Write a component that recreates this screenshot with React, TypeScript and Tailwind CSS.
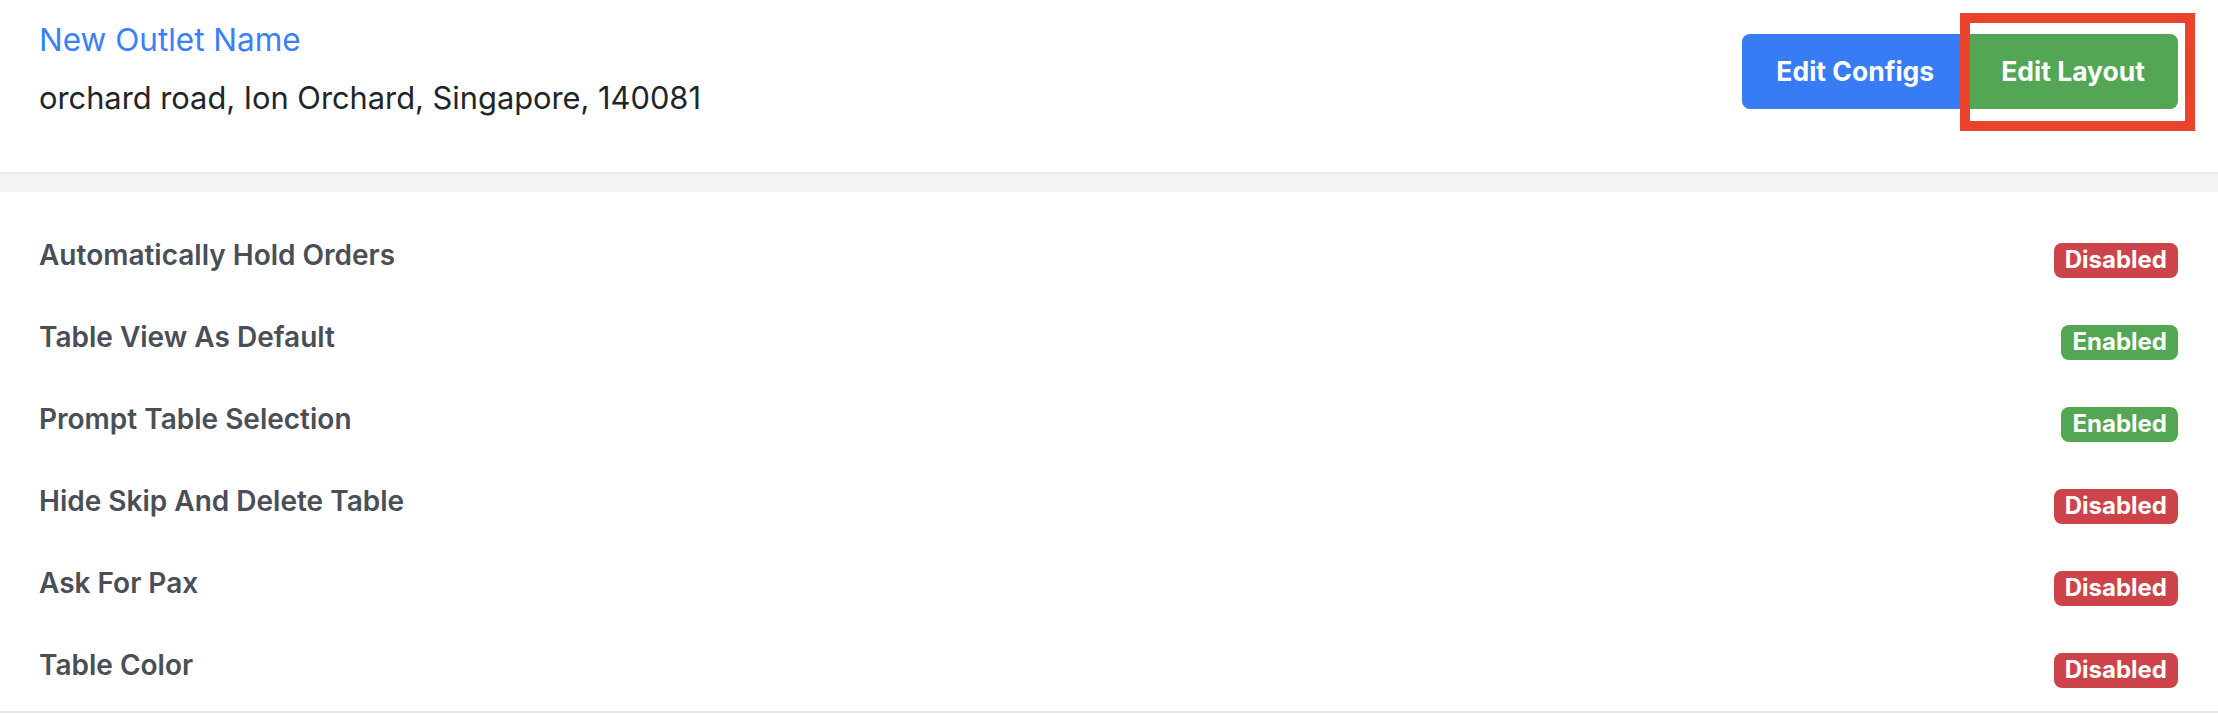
const settings = [
  { label: "Automatically Hold Orders", enabled: false },
  { label: "Table View As Default", enabled: true },
  { label: "Prompt Table Selection", enabled: true },
  { label: "Hide Skip And Delete Table", enabled: false },
  { label: "Ask For Pax", enabled: false },
  { label: "Table Color", enabled: false },
];

function StatusBadge({ enabled }: { enabled: boolean }) {
  return (
    <span
      className={`flex h-[35px] items-center rounded-[8px] px-[11px] text-[24px] leading-none font-bold text-white ${
        enabled ? "bg-[#53a653]" : "bg-[#cc444a]"
      }`}
    >
      {enabled ? "Enabled" : "Disabled"}
    </span>
  );
}

export default function App() {
  return (
    <div className="min-h-[714px] bg-white font-['Inter',sans-serif]">
      <header className="flex items-start justify-between bg-white px-[39px] pt-[22px] pb-[56px]">
        <div className="flex flex-col gap-[22px]">
          <div className="text-[31.5px] leading-[36px] text-[#3b80f6]">New Outlet Name</div>
          <div className="text-[30.8px] leading-[36px] text-[#212529]">
            orchard road, Ion Orchard, Singapore, 140081
          </div>
        </div>
        <div className="relative mt-[12px] mr-[1px] flex">
          <button className="h-[75px] rounded-l-[8px] bg-[#377bf5] px-[34px] text-[26.5px] font-bold text-white">
            Edit Configs
          </button>
          <button className="h-[75px] rounded-r-[8px] bg-[#53a653] px-[33px] text-[26.5px] font-bold text-white">
            Edit Layout
          </button>
          {/* annotation box drawn over the layout button */}
          <div className="pointer-events-none absolute top-[-21px] right-[-17px] bottom-[-22px] w-[235px] border-[10px] border-[#e9432b]" />
        </div>
      </header>

      <div className="h-[20px] bg-[#f3f4f6] shadow-[inset_0_4px_5px_-3px_rgba(0,0,0,0.06)]" />

      <section className="border-b-2 border-[#e6e7e9] px-[39px] pt-[27px]">
        {settings.map((s) => (
          <div key={s.label} className="flex h-[82px] items-center justify-between">
            <span className="mb-[11px] text-[28px] leading-[34px] font-semibold text-[#4a4f57]">
              {s.label}
            </span>
            <span className="mr-[1px]">
              <StatusBadge enabled={s.enabled} />
            </span>
          </div>
        ))}
      </section>
    </div>
  );
}
